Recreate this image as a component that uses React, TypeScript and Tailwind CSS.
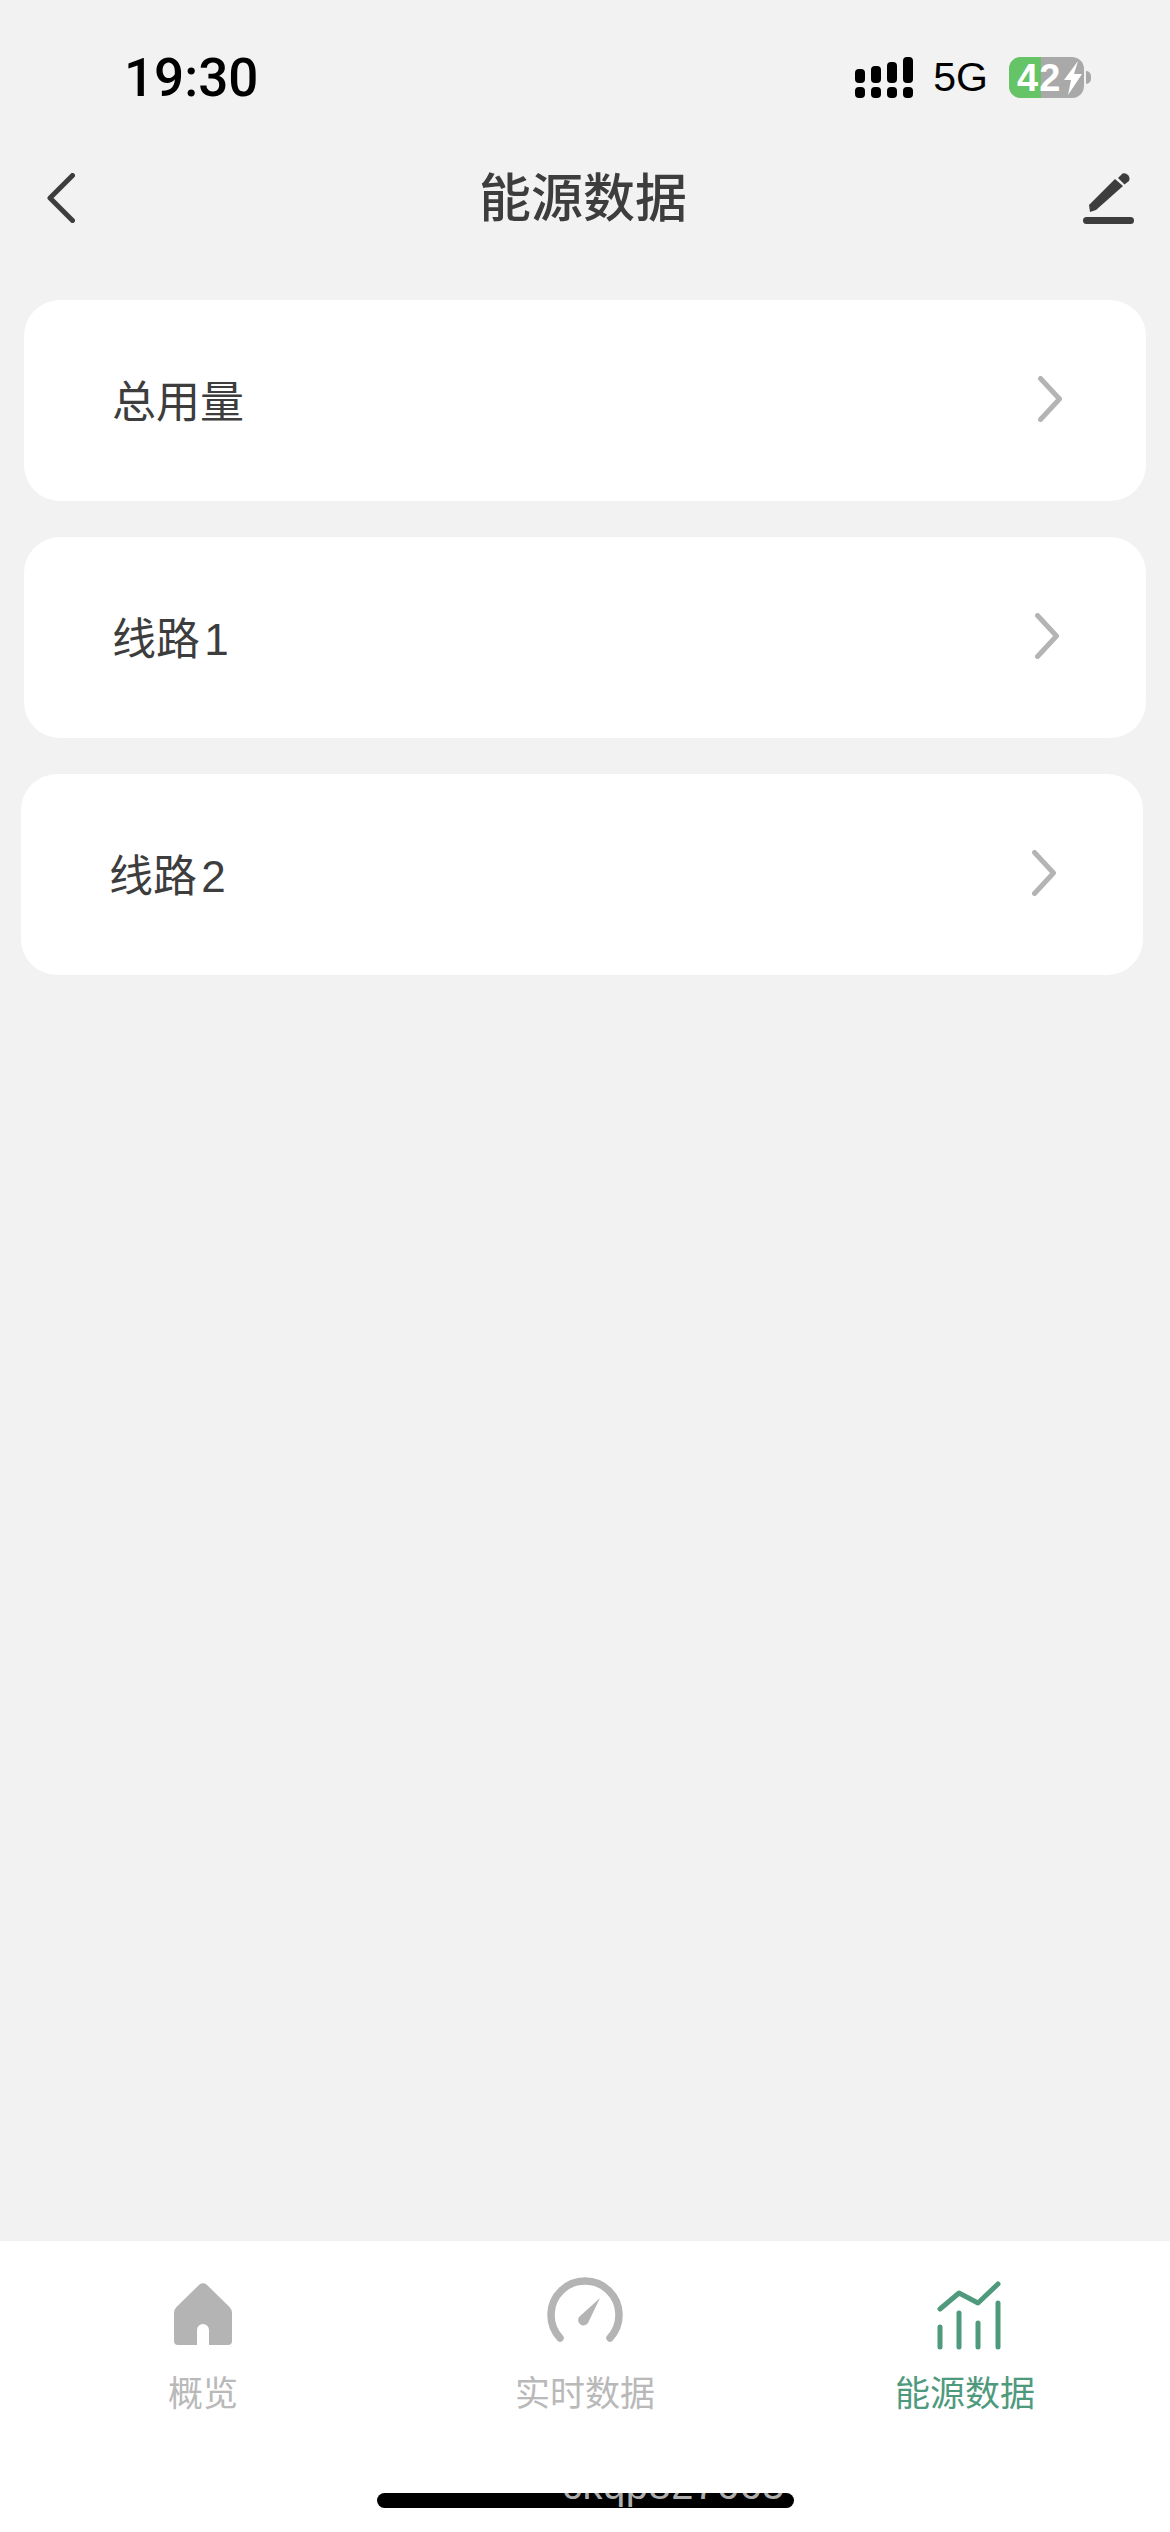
const rows = [
  { label: '总用量', card: 'mx-[24px]', pr: 'pr-[83px]' },
  { label: '线路 1', card: 'mx-[24px]', pr: 'pr-[86px]' },
  { label: '线路 2', card: 'ml-[21px] mr-[27px]', pr: 'pr-[86px]' },
];

function Chevron() {
  return (
    <svg width="26" height="46" viewBox="0 0 26 46" fill="none" stroke="#b4b4b4" strokeWidth="5" strokeLinecap="round" strokeLinejoin="round">
      <path d="M3.5 2.5 L22.5 23 L3.5 43.5" />
    </svg>
  );
}

function SignalIcon() {
  const cols = [
    { x: 0, top: 12, h: 14 },
    { x: 16, top: 9, h: 17 },
    { x: 32, top: 5, h: 21 },
    { x: 48, top: 0, h: 26 },
  ];
  return (
    <svg width="58" height="41" viewBox="0 0 58 41" fill="#000">
      {cols.map((c) => (
        <g key={c.x}>
          <rect x={c.x} y={c.top} width="10" height={c.h} rx="4" />
          <rect x={c.x} y="30" width="10" height="11" rx="4" />
        </g>
      ))}
    </svg>
  );
}

function Battery() {
  return (
    <div className="flex items-center">
      <div className="relative flex h-[41px] w-[75px] items-center overflow-hidden rounded-[12px] bg-[#a9a9a9]">
        <div className="h-full w-[32px] bg-[#65c466]" />
        <div className="absolute inset-0 flex items-center pl-[8px] text-[38px] font-bold leading-none tracking-[1px] text-white">
          42
          <svg width="20" height="34" viewBox="0 0 20 34" fill="#fff" className="ml-[2px]">
            <path d="M15 0 L1 19 H8 L5 34 L19 13 H11 Z" />
          </svg>
        </div>
      </div>
      <div className="ml-[2px] h-[13px] w-[5px] rounded-r-full bg-[#a9a9a9]" />
    </div>
  );
}

function HomeIcon() {
  return (
    <svg width="58" height="62" viewBox="0 0 58 62" fill="#b4b4b4">
      <path d="M25.5 1.5 Q29 -1 32.5 1.5 L55.5 24 Q58 26.5 58 30 V58 Q58 62 54 62 H35 V47 A6 6 0 0 0 23 47 V62 H4 Q0 62 0 58 V30 Q0 26.5 2.5 24 Z" />
    </svg>
  );
}

function GaugeIcon() {
  return (
    <svg width="76" height="66" viewBox="0 0 76 66" fill="none">
      <path d="M13 61 A34 34 0 1 1 63 61" stroke="#b4b4b4" strokeWidth="7.5" strokeLinecap="round" />
      <path d="M53 21 L41 46 A5 5 0 1 1 32 40 Z" fill="#b4b4b4" />
    </svg>
  );
}

function ChartIcon() {
  return (
    <svg width="64" height="69" viewBox="0 0 64 69" fill="none" stroke="#4f9a7d" strokeWidth="5" strokeLinecap="round" strokeLinejoin="round" className="ml-[8px]">
      <path d="M3 28 L22 12 L41 22 L61 3" />
      <path d="M3 46 V66" />
      <path d="M22 32 V66" />
      <path d="M41 42 V66" />
      <path d="M61 22 V66" />
    </svg>
  );
}

const tabs = [
  { label: '概览', icon: <HomeIcon />, color: 'text-[#b9b9b9]', w: 'w-[406px]', pb: 'pb-[31px]' },
  { label: '实时数据', icon: <GaugeIcon />, color: 'text-[#b9b9b9]', w: 'w-[358px]', pb: 'pb-[33px]' },
  { label: '能源数据', icon: <ChartIcon />, color: 'text-[#4f9a7d]', w: 'w-[402px]', pb: 'pb-[26px]' },
];

export default function App() {
  return (
    <div
      className="relative flex h-[2532px] w-[1170px] flex-col overflow-hidden bg-[#f2f2f2]"
      style={{ fontFamily: '"Liberation Sans", "Noto Sans CJK SC", sans-serif' }}
    >
      {/* status bar */}
      <div className="flex h-[150px] shrink-0 items-start justify-between pl-[124px] pr-[79px] pt-[48px]">
        <span className="font-['Roboto'] text-[53px] font-medium leading-[60px] text-black">19:30</span>
        <div className="flex items-center pt-[9px]">
          <SignalIcon />
          <span className="ml-[20px] mr-[21px] text-[41px] leading-none text-black">5G</span>
          <Battery />
        </div>
      </div>

      {/* header */}
      <div className="relative flex h-[96px] shrink-0 items-center justify-between pl-[47px] pr-[36px]">
        <svg width="28" height="50" viewBox="0 0 28 50" fill="none" stroke="#3d3d3d" strokeWidth="5" strokeLinecap="round" strokeLinejoin="round">
          <path d="M25.5 2.5 L3 25 L25.5 47.5" />
        </svg>
        <span className="ml-[8px] pt-[2px] text-[52px] font-medium leading-none text-[#3d3d3d]">能源数据</span>
        <svg width="51" height="52" viewBox="0 0 51 52" fill="#3d3d3d">
          <path d="M6 33 L32 7 L40 14 L13 38 L7 40 Z" />
          <path d="M35 6 L39.5 1.5 A5.5 5.5 0 0 1 46 9 L41.5 12.5 Z" />
          <rect x="0" y="45" width="51" height="7" rx="3.5" />
        </svg>
      </div>

      {/* list */}
      <div className="mt-[54px] flex flex-col gap-[36px]">
        {rows.map((row) => (
          <div key={row.label} className={`flex h-[201px] items-center justify-between rounded-[36px] bg-white pl-[88px] ${row.card} ${row.pr}`}>
            <span className="pt-[5px] text-[44px] leading-none text-[#3d3d3d] [word-spacing:-8px]">{row.label}</span>
            <div className="pb-[3px]">
              <Chevron />
            </div>
          </div>
        ))}
      </div>

      {/* tab bar */}
      <div className="mt-auto flex h-[291px] shrink-0 items-start bg-white">
        {tabs.map((tab) => (
          <div key={tab.label} className={`flex flex-col items-center ${tab.w}`}>
            <div className={`flex h-[135px] items-end ${tab.pb}`}>{tab.icon}</div>
            <span className={`text-[35px] leading-none ${tab.color}`}>{tab.label}</span>
          </div>
        ))}
      </div>

      {/* home indicator */}
      <div className="absolute bottom-[24px] left-[377px] h-[15px] w-[417px] overflow-hidden rounded-full bg-black">
        <span className="absolute left-[185px] top-[-28px] text-[40px] leading-none tracking-[0.5px] text-[#b0b0b0]">ckqp827665</span>
      </div>
    </div>
  );
}
